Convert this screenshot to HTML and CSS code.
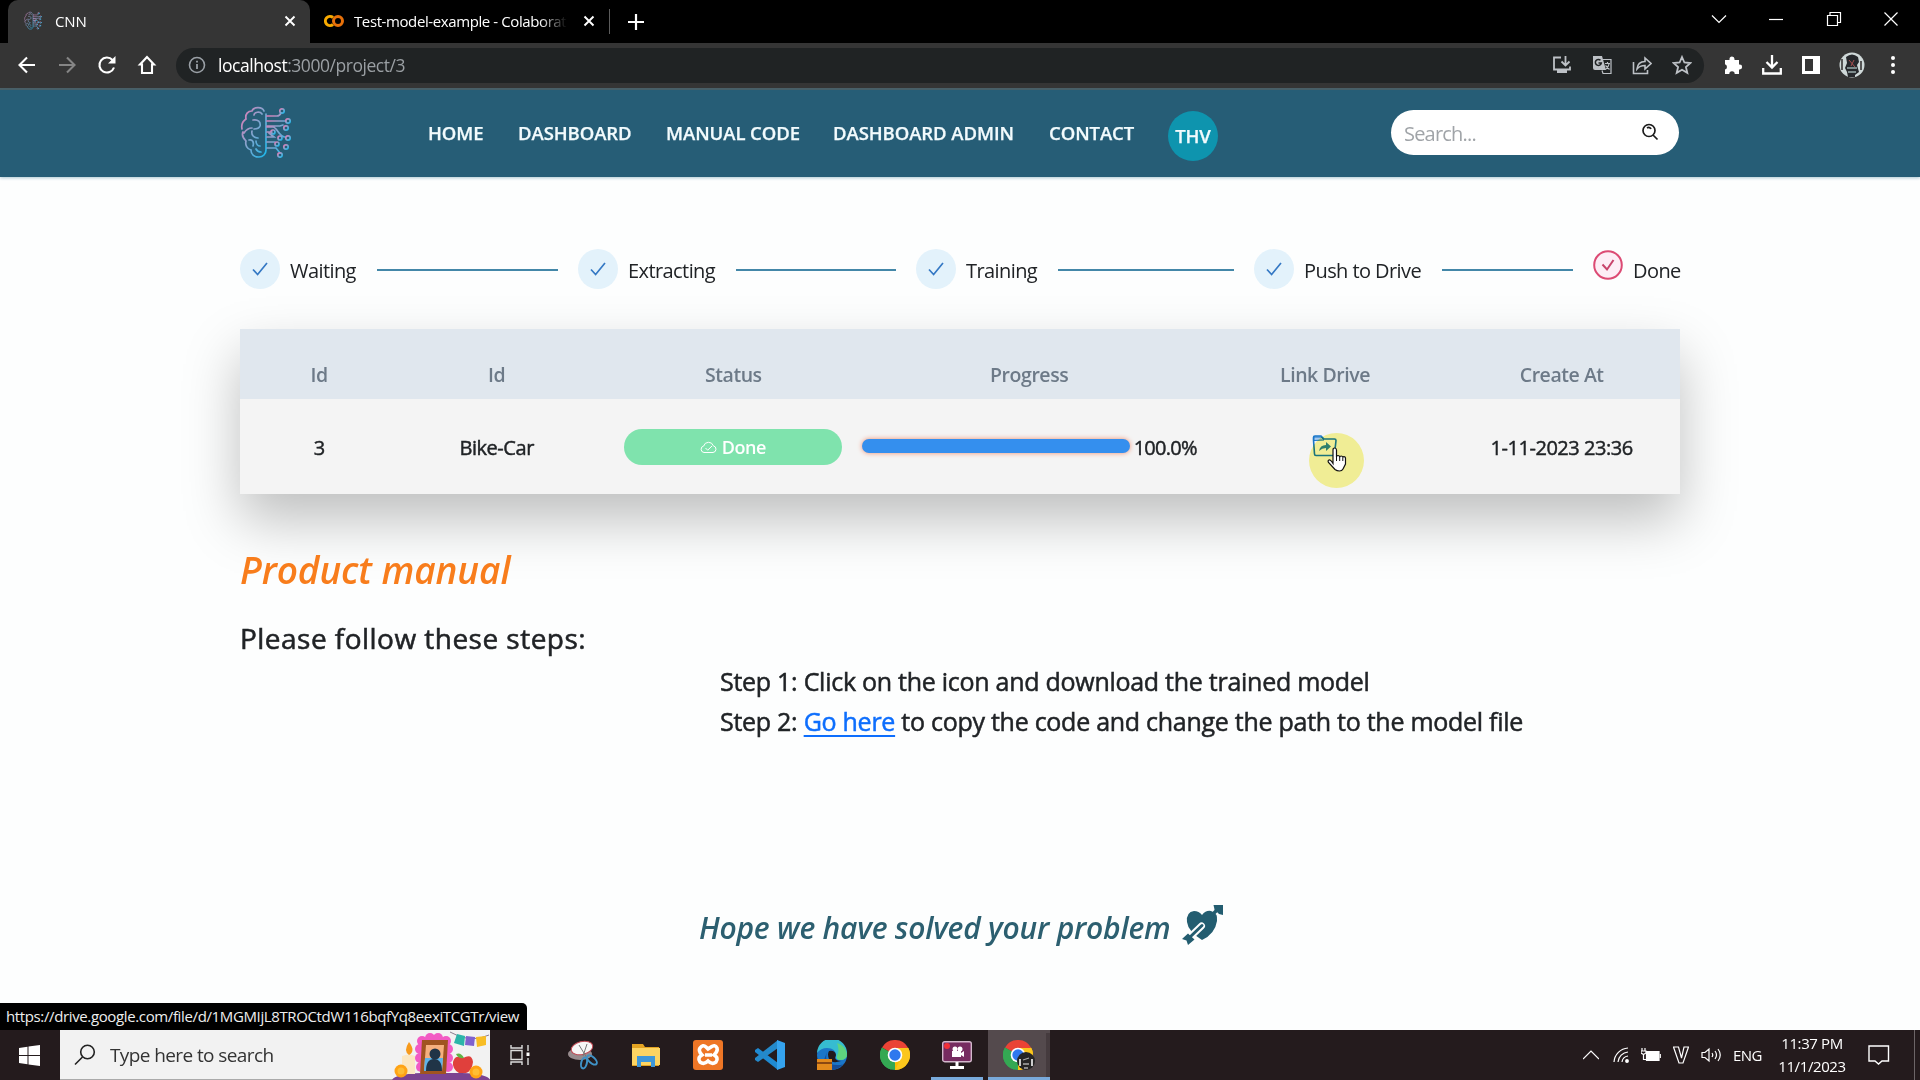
FILE: index.html
```html
<!DOCTYPE html>
<html lang="en">
<head>
<meta charset="utf-8">
<title>CNN</title>
<link rel="stylesheet" href="styles.css">
</head>
<body>
<svg class="defs" width="0" height="0" aria-hidden="true">
  <defs>
    <linearGradient id="brainInk" x1="0" y1="0" x2="1" y2="1">
      <stop offset="0" stop-color="#e879b4"/><stop offset=".5" stop-color="#7fa6cf"/><stop offset="1" stop-color="#19b8ec"/>
    </linearGradient>
    <symbol id="brain" viewBox="0 0 52 52">
      <g fill="none" stroke="url(#brainInk)" stroke-width="1.7" stroke-linecap="round">
        <path d="M26 8v36c0 4-3 7-7 7-5 0-8-3-8-7-4-1-6-5-5-9-4-4-4-7-3-9M2 23c-1-5 1-8 4-10-1-5 2-8 6-8 1-4 10-5 12 0M14 9c0-3 6-4 8-1M4 27c2-3 4-5 8-5M13 14c5-1 8 2 7 6-1 3-4 3-6 3M12 25c-1 4 2 7 6 7M9 34c4-1 5 3 4 6M16 35c0 3 2 5 4 5M16 43c1 2 3 3 5 3"/>
        <path d="M27 10h10c2 0 3-1 4-3M27 15h19M27 20h13l3-1M27 26h5M27 31h7l-5-4M27 21h6c4 0 6 10 12 10M27 36h8M27 42h9l4 5"/>
        <circle cx="42" cy="5" r="2.2"/><circle cx="48" cy="15" r="2.2"/><circle cx="46" cy="22" r="2.2"/><circle cx="33" cy="26" r="2"/><circle cx="40" cy="32" r="2"/><circle cx="48" cy="32" r="2.2"/><circle cx="37" cy="38" r="2"/><circle cx="46" cy="41" r="2.2"/><circle cx="40" cy="49" r="2.2"/>
      </g>
    </symbol>
    <symbol id="close" viewBox="0 0 12 12"><path d="M1.5 1.5l9 9m0-9l-9 9" stroke="#fff" stroke-width="1.9"/></symbol>
    <symbol id="check" viewBox="0 0 16 14"><path d="M1 7.5l4.6 5L15 1" fill="none" stroke="#3478c4" stroke-width="1.7"/></symbol>
    <symbol id="chrome" viewBox="0 0 30 30">
      <path d="M15 15L2 7.500A15 15 0 0 1 28 7.500z" fill="#ea4335"/>
      <path d="M15 15L28 7.500A15 15 0 0 1 15 30z" fill="#fbbc05"/>
      <path d="M15 15v15A15 15 0 0 1 2 7.500z" fill="#34a853"/>
      <path d="M15 8h13.300A15 15 0 0 1 15 30l6-11.500z" fill="#fbc61c"/>
      <path d="M2 7.500L9 18.500 15 22l-4 7.500A15 15 0 0 1 2 7.500z" fill="#34a853"/>
      <circle cx="15" cy="15" r="7.300" fill="#fff"/><circle cx="15" cy="15" r="5.700" fill="#2f78ee"/>
    </symbol>
  </defs>
</svg>

<div class="tabstrip">
  <div class="tab tab-active">
    <svg class="favicon" width="18" height="21"><use href="#brain"/></svg>
    <span class="tab-title">CNN</span>
    <svg class="tab-close" width="12" height="12"><use href="#close"/></svg>
  </div>
  <div class="tab">
    <svg class="favicon" width="20" height="14" viewBox="0 0 20 14"><g fill="none" stroke-width="3"><path d="M9 3.500A4.600 4.600 0 1 0 9 10.500" stroke="#f9ab00"/><circle cx="14" cy="7" r="4.500" stroke="#e8710a"/></g></svg>
    <span class="tab-title tab-title-long">Test-model-example - Colaborat</span>
    <svg class="tab-close" width="12" height="12"><use href="#close"/></svg>
  </div>
  <span class="tab-divider"></span>
  <svg class="new-tab" width="16" height="16" viewBox="0 0 16 16"><path d="M8 0v16M0 8h16" stroke="#fff" stroke-width="2.200"/></svg>
  <div class="window-controls">
    <svg width="16" height="16" viewBox="0 0 16 16"><path d="M1 4.500l7 7 7-7"/></svg>
    <svg width="16" height="16" viewBox="0 0 16 16"><path d="M1 8.500h14"/></svg>
    <svg width="16" height="16" viewBox="0 0 16 16"><path d="M1.500 4.500h10v10h-10zM4 4V1.500h10.500v10H12"/></svg>
    <svg width="16" height="16" viewBox="0 0 16 16"><path d="M1.500 1.500l13 13m0-13l-13 13"/></svg>
  </div>
</div>

<div class="toolbar">
  <div class="nav-buttons">
    <svg width="20" height="20" viewBox="0 0 20 20" class="line"><path d="M18 10H3M10 2.500L2.500 10l7.500 7.500"/></svg>
    <svg width="20" height="20" viewBox="0 0 20 20" class="line dim"><path d="M2 10h15M10 2.500l7.500 7.500-7.500 7.500"/></svg>
    <svg width="20" height="20" viewBox="0 0 20 20" class="line"><path d="M17 12.500A7.500 7.500 0 1 1 15.500 5"/><path d="M18.500 1v7.500H11z" fill="#fff" stroke="none"/></svg>
    <svg width="20" height="20" viewBox="0 0 20 20" class="line"><path d="M10 2L3 9.500h2V18h10V9.500h2z"/></svg>
  </div>
  <div class="omnibox">
    <svg class="info" width="18" height="18" viewBox="0 0 18 18"><circle cx="9" cy="9" r="7.500" fill="none" stroke="#9aa0a6" stroke-width="1.600"/><path d="M9 8v5M9 4.800v1.800" stroke="#9aa0a6" stroke-width="1.800"/></svg>
    <span class="url"><b>localhost</b>:3000/project/3</span>
    <div class="omni-actions">
      <svg width="20" height="20" viewBox="0 0 20 20"><g fill="none" stroke="#bdc1c6" stroke-width="1.800"><path d="M9 2.500H2v12h16v-3M13.500 1v9M9.500 6.500l4 4 4-4"/></g><path d="M5 15h10v3H5z" fill="#bdc1c6"/></svg>
      <svg width="20" height="20" viewBox="0 0 20 20"><path d="M1 1h9l4 14H3a2 2 0 0 1-2-2z" fill="#bdc1c6"/><path d="M8.500 5.300a3 3 0 1 0 .8 2.700H6.500" fill="none" stroke="#202324" stroke-width="1.500"/><path d="M11 4.500h8v14h-8l-1-3M13 8.500h5M15.500 7v1.500M17 9c-.5 3-2 4.500-3.500 5.500M13.500 10.500l4 4" fill="none" stroke="#bdc1c6" stroke-width="1.200"/></svg>
      <svg width="20" height="20" viewBox="0 0 20 20"><g fill="none" stroke="#bdc1c6" stroke-width="1.600"><path d="M1.500 7v11.500h14V15"/><path d="M5 14c.5-5 3-7.500 8-7.500V3l6 5.500-6 5.500v-3.500c-4 0-6 1-8 3.500z"/></g></svg>
      <svg width="20" height="20" viewBox="0 0 20 20"><path d="M10 2l2.400 5.500 6 .5-4.500 4 1.400 5.800L10 14.700l-5.300 3.100L6.100 12 1.600 8l6-.5z" fill="none" stroke="#bdc1c6" stroke-width="1.800"/></svg>
    </div>
  </div>
  <div class="ext-actions">
    <svg width="20" height="20" viewBox="0 0 20 20"><path d="M2 5h4.500V4a2.500 2.500 0 0 1 5 0v1H16v4.500h.7a2.400 2.400 0 0 1 0 4.900H16V19h-4.300a2.700 2.700 0 0 0-5.400 0H2v-4.500a2.700 2.700 0 0 0 0-5.200z" fill="#fff"/></svg>
    <svg width="20" height="20" viewBox="0 0 20 20"><path d="M10 0v12M4.500 7l5.500 5.500L15.500 7M1.200 13v5.500h17.600V13" fill="none" stroke="#fff" stroke-width="2.300"/></svg>
    <svg width="20" height="20" viewBox="0 0 20 20"><path d="M1 1h18v18H1zM4 4v12h8V4z" fill="#fff" fill-rule="evenodd"/></svg>
    <svg width="26" height="26" viewBox="0 0 26 26"><circle cx="13" cy="13" r="12.500" fill="#cfd8d8"/><path d="M7 5q6-5 12 0l1 5-2 3 2 7-4 3v2H9l-1-5-2-4 2-5z" fill="#26282c"/><path d="M10 8l6 7M15 8l-3 6" stroke="#a85050" fill="none"/><path d="M8 16h10M9 20h8" stroke="#9aa" stroke-width="1.500"/><path d="M3 7v11M22 9v9" stroke="#555" stroke-width="2"/></svg>
    <svg width="20" height="20" viewBox="0 0 20 20" fill="#fff"><circle cx="10" cy="3" r="2"/><circle cx="10" cy="10" r="2"/><circle cx="10" cy="17" r="2"/></svg>
  </div>
</div>

<main class="viewport">
  <header class="site-header">
    <svg class="logo" width="52" height="52"><use href="#brain"/></svg>
    <nav class="site-nav">
      <a>HOME</a><a>DASHBOARD</a><a>MANUAL CODE</a><a>DASHBOARD ADMIN</a><a>CONTACT</a>
      <span class="user-badge">THV</span>
    </nav>
    <div class="search">
      <span>Search...</span>
      <svg width="18" height="18" viewBox="0 0 18 18"><g fill="none" stroke="#1b1b1b" stroke-width="1.700"><circle cx="8" cy="7.500" r="6"/><path d="M12 12l4.500 4.500M6 5c1.500-1 3.500-.5 4 1"/></g></svg>
    </div>
  </header>

  <section class="content">
    <ol class="steps">
      <li><i class="dot"><svg width="16" height="14"><use href="#check"/></svg></i><span>Waiting</span><hr></li>
      <li><i class="dot"><svg width="16" height="14"><use href="#check"/></svg></i><span>Extracting</span><hr></li>
      <li><i class="dot"><svg width="16" height="14"><use href="#check"/></svg></i><span>Training</span><hr></li>
      <li><i class="dot"><svg width="16" height="14"><use href="#check"/></svg></i><span>Push to Drive</span><hr></li>
      <li class="last"><svg class="done-mark" width="30" height="30" viewBox="0 0 30 30"><circle cx="15" cy="15" r="13.800" fill="#fdeef6" stroke="#dc4b74" stroke-width="2"/><path d="M9.500 14.500l4.500 5 6.500-9.500" fill="none" stroke="#c8446c" stroke-width="2"/></svg><span>Done</span></li>
    </ol>

    <div class="table">
      <div class="row head"><span>Id</span><span>Id</span><span>Status</span><span>Progress</span><span>Link Drive</span><span>Create At</span></div>
      <div class="row body">
        <span>3</span><span>Bike-Car</span>
        <span class="status"><svg width="17" height="14" viewBox="0 0 17 14"><path d="M4 12.500a3.300 3.300 0 0 1-.3-6.500 5 5 0 0 1 9.600-.2A3.400 3.400 0 0 1 13 12.500zM5.500 8l2.200 2.200L12 6" fill="none" stroke="#fff" stroke-width="1"/></svg>Done</span>
        <span class="progress"><i class="bar"></i><b>100.0%</b></span>
        <span class="drive">
          <svg width="25" height="22" viewBox="0 0 25 22"><path d="M1.500 5V2.500Q1.500 1 3 1h6l3 3h10.500q1.500 0 1.500 1.500L22.500 19q0 1.500-1.500 1.500H4Q2.500 20.500 2.500 19z" fill="#f4f4f4" stroke="#1976c9" stroke-width="1.600"/><path d="M2 5.500V2h7l3 3z" fill="#a5c9ee" stroke="#1976c9"/><path d="M7 16q1-6 7-6V7l5 4.500-5 4.500v-3q-4 0-7 3z" fill="#2f83b0"/></svg>
          <i class="halo"></i>
          <svg class="hand" width="20" height="25" viewBox="0 0 20 25"><path d="M6 16.500V3q0-2 1.700-2T9.500 3v7q0-1.500 1.500-1.500t1.700 1.700q.2-1.200 1.500-1.200t1.600 1.600q.2-1 1.300-1T18.500 11v6l-2.500 5q-1 2-3.500 2T8 22.500L1.500 15.500Q.5 13.500 2 13t4 3.500z" fill="#fff" stroke="#111" stroke-width="1.200"/><path d="M9.500 10v4M12.700 10v4M15.800 11v3" stroke="#111"/></svg>
        </span>
        <span>1-11-2023 23:36</span>
      </div>
    </div>

    <h1>Product manual</h1>
    <h2>Please follow these steps:</h2>
    <div class="instructions">
      <p>Step 1: Click on the icon and download the trained model</p>
      <p>Step 2: <a>Go here</a> to copy the code and change the path to the model file</p>
    </div>
    <p class="closing"><span>Hope we have solved your problem</span>
      <svg width="41" height="41" viewBox="0 0 41 41"><path d="M20 35Q6 26 5 17 4 7 12 6q5 0 8 4 4-5 9-4 7 2 6 10-2 13-15 19z" fill="#235d70"/><path d="M19.500 21L7 33" stroke="#fdfefe" stroke-width="7" stroke-linecap="round"/><path d="M20 20.500L7 33" stroke="#235d70" stroke-width="3" stroke-linecap="round"/><path d="M6 28.500l-6 5.500 4.500 1.500L6 40l6.500-5.500z" fill="#235d70"/><path d="M29 11l6-6" stroke="#235d70" stroke-width="3.500"/><path d="M31.500 0H41v10l-4-1-4.500-4.500z" fill="#235d70"/></svg>
    </p>
  </section>
  <div class="link-hint"><span>https://drive.google.com/file/d/1MGMIjL8TROCtdW116bqfYq8eexiTCGTr/view</span></div>
</main>

<footer class="taskbar">
  <div class="start"><svg width="21" height="21" viewBox="0 0 21 21"><path d="M0 3l8.500-1.200V10H0zM9.500 1.600L21 0v10H9.500zM0 11h8.500v8.200L0 18zM9.500 11H21v10L9.500 19.400z" fill="#fff"/></svg></div>
  <div class="task-search">
    <svg width="22" height="22" viewBox="0 0 22 22"><g fill="none" stroke="#222" stroke-width="1.600"><circle cx="13.500" cy="8" r="6.800"/><path d="M8.500 13L1 20.500"/></g></svg>
    <span>Type here to search</span>
    <svg class="altar" width="98" height="50" viewBox="0 0 98 50">
      <path d="M0 50q3-6 30-7h40q26 1 28 7z" fill="#7b4390"/>
      <path d="M10 26q7-3 13 0v18H10z" fill="#fbe7c2"/><path d="M17 12q7 9 0 13-6-4 0-13z" fill="#f79a1c"/>
      <g fill="#f25bc4"><circle cx="30" cy="11" r="5"/><circle cx="38" cy="8" r="5"/><circle cx="46" cy="8" r="5"/><circle cx="54" cy="11" r="5"/><circle cx="28" cy="19" r="5"/><circle cx="56" cy="19" r="5"/><circle cx="28" cy="28" r="5"/><circle cx="56" cy="28" r="5"/><circle cx="29" cy="37" r="5"/><circle cx="56" cy="37" r="5"/></g>
      <path d="M30 10h26l-2 34H28z" fill="#a05420"/><path d="M34 15h18l-2 26H32z" fill="#f6b07e"/><path d="M33 28h18l-1 13H32z" fill="#5fb3e8"/><circle cx="43" cy="24" r="5.500" fill="#203447"/><path d="M34 41q0-12 8-12t8 12z" fill="#203447"/>
      <path d="M58 2q20 12 39 3" fill="none" stroke="#8b7c8f"/><path d="M65 4l8 2-1 10-10-3z" fill="#2bb5a9"/><path d="M74 6l9 1-1 9-9-1z" fill="#7f62cf"/><path d="M84 7l10-1v9l-9 2z" fill="#f8bd24"/>
      <path d="M71 28q9-5 10 4-1 9-7 11h-7q-7-4-6-11 2-8 10-4z" fill="#e0403c"/><path d="M64 24q5-2 8 4-6 1-8-4z" fill="#62b346"/><circle cx="9" cy="41" r="6.500" fill="#ffa315"/><circle cx="84" cy="42" r="6.500" fill="#ffa315"/><circle cx="9" cy="41" r="3.500" fill="#ffbd35"/><circle cx="84" cy="42" r="3.500" fill="#ffbd35"/>
    </svg>
  </div>
  <div class="apps">
    <div><svg width="22" height="20" viewBox="0 0 22 20"><g fill="none" stroke="#ddd" stroke-width="1.400"><path d="M2 5.500h11v9H2zM2 0v3h11V0M2 20v-3h11v3M19 0v6M19 13v7"/></g><path d="M17.500 7.500h3v3.500h-3z" fill="#fff"/></svg></div>
    <div><svg width="32" height="30" viewBox="0 0 32 30"><ellipse cx="13" cy="14" rx="12" ry="6" fill="#978b8d"/><ellipse cx="15" cy="8" rx="11" ry="6.500" transform="rotate(-14 15 8)" fill="#f6f6f6" stroke="#c04b55"/><path d="M12 5l8 13M20 4l-4 12" stroke="#777"/><g fill="none" stroke="#3f92c6" stroke-width="2"><ellipse cx="17" cy="23" rx="2.800" ry="5.500" transform="rotate(14 17 23)"/><ellipse cx="25" cy="20" rx="3" ry="6" transform="rotate(-48 25 20)"/></g></svg></div>
    <div><svg width="30" height="26" viewBox="0 0 30 26"><path d="M1 2h11l2 3h14v19H1z" fill="#e3a322"/><path d="M1 6h28v17H1z" fill="#fcd462"/><path d="M6 14h18v11h-4v-5h-10v5H6z" fill="#3f97d8"/></svg></div>
    <div><svg width="30" height="30" viewBox="0 0 30 30"><rect width="30" height="30" rx="3" fill="#ee7626"/><path d="M7 8q3-4 6-1l2 2 3-2q4-3 6 1 1 3-3 7 5 3 2 7-4 3-8-1-4 4-8 1-3-4 2-7-4-4-2-7zM12 15h7" fill="none" stroke="#fff" stroke-width="3.600"/></svg></div>
    <div><svg width="30" height="30" viewBox="0 0 30 30"><path d="M0 10l3-2 20 15v7L0 12z" fill="#1f8ad2"/><path d="M0 20l3 2L23 8V0L0 18z" fill="#2489ca"/><path d="M22 0l8 3v24l-8 3z" fill="#35a3ee"/></svg></div>
    <div><svg width="30" height="30" viewBox="0 0 30 30"><circle cx="15" cy="15" r="15" fill="#1b76c8"/><path d="M0 13A15 15 0 0 1 30 14q0 6-7 6-5 0-4-4Q19 8 10 8 4 8 0 13z" fill="#36bcd0"/><path d="M20 3q9 3 10 11 0 6-7 6-4 0-3-4 3-6 0-13z" fill="#5fd47e"/><path d="M10 12q-4 14 12 13 4 0 5-2-5 7-13 7T7 20z" fill="#174e98"/><path d="M12 11q6-1 7 4l-1 3q1 3 6 3-9 3-12-2-2-5 0-8z" fill="#221a1c"/><path d="M0 19h15v11H0z" fill="#e38a1c"/><path d="M0 23h15" stroke="#8b4812" stroke-width="2"/></svg></div>
    <div><svg width="30" height="30"><use href="#chrome"/></svg></div>
    <div class="running"><svg width="30" height="28" viewBox="0 0 30 28"><rect x=".7" y=".7" width="28.600" height="20" rx="2" fill="#762b60" stroke="#d3b8cc" stroke-width="1.400"/><path d="M15 21v4M8 26.500h14" stroke="#fff" stroke-width="3"/><circle cx="5" cy="5" r="3" fill="#f23038"/><circle cx="13" cy="8" r="2.500" fill="#fff"/><circle cx="18" cy="8" r="2.500" fill="#fff"/><path d="M10 10h9v6h-9zM19 12l3-2v6l-3-2z" fill="#fff"/></svg></div>
    <div class="running current"><svg width="32" height="31" viewBox="0 0 32 31"><use href="#chrome" width="30" height="30"/><circle cx="23" cy="21" r="9" fill="#252525"/><path d="M17 19v7M29 19v7" stroke="#ccc" stroke-width="2"/><path d="M20 20l6-2M20 24h6M21 28h4" stroke="#aaa" stroke-width="1.300"/></svg></div>
  </div>
  <div class="tray">
    <svg width="16" height="16" viewBox="0 0 16 16"><path d="M0 12l8-8 8 8"/></svg>
    <svg width="16" height="16" viewBox="0 0 16 16"><path d="M1 15A15 15 0 0 1 15 1M5 15A11 11 0 0 1 15 5M9 15a7 7 0 0 1 6-6"/><circle cx="14" cy="14" r="1.300" fill="#fff"/></svg>
    <svg width="20" height="14" viewBox="0 0 20 14"><path d="M5.500 3.500h12.500v9H5.500z" fill="#fff"/><path d="M19.300 6v4M1 0v3M4 0v3M0 3h5v2L2.500 6.500 0 5zM2.500 6v5.500H5"/></svg>
    <svg width="16" height="18" viewBox="0 0 16 18"><path d="M.5 1h5L8.500 12 11 1h4.500L10 17H6z"/></svg>
    <svg width="20" height="16" viewBox="0 0 20 16"><path d="M1 5.500h3L8 2v12l-4-3.500H1zM11 6q1.500 2 0 4M14 4q3 4 0 8M17 2q4.500 6 0 12"/></svg>
    <span class="lang">ENG</span>
  </div>
  <div class="clock"><span>11:37 PM</span><span>11/1/2023</span></div>
  <svg class="notice" width="22" height="20" viewBox="0 0 22 20"><path d="M1 1h19.500v15H14l-3.500 3L7 16H1z" fill="none" stroke="#fff" stroke-width="1.400"/></svg>
  <span class="peek"></span>
</footer>
</body>
</html>
```
FILE: styles.css
```css
* { box-sizing: border-box; }
body { margin: 0; width: 1920px; height: 1080px; overflow: hidden; display: flex; flex-direction: column; background: #fdfefe; font-family: "Open Sans", "Noto Sans", sans-serif; color: #202326; }
svg { flex: none; display: block; }
p, h1, h2, ol { margin: 0; padding: 0; }
.defs { position: absolute; }

/* browser frame */
.tabstrip { height: 43px; flex: none; background: #000; display: flex; align-items: center; padding-left: 8px; color: #fff; }
.tab { display: flex; align-items: center; height: 43px; padding: 0 14px 2px; font-size: 15px; white-space: nowrap; }
.tab-active { width: 302px; background: #353535; border-radius: 10px 10px 0 0; padding-left: 16px; }
.favicon { margin-right: 13px; }
.tab-title { letter-spacing: -.1px; }
.tab:not(.tab-active) { width: 299px; }
.tab:not(.tab-active) .favicon { margin-right: 10px; }
.tab-title-long { width: 213px; overflow: hidden; letter-spacing: -.4px; -webkit-mask-image: linear-gradient(90deg, #000 87%, transparent); mask-image: linear-gradient(90deg, #000 87%, transparent); }
.tab-close { margin-left: auto; }
.tab-divider { width: 1px; height: 25px; background: #5c5c5c; }
.new-tab { margin-left: 18px; }
.window-controls { margin-left: auto; display: flex; gap: 41.300px; padding: 0 21px 5px 0; fill: none; stroke: #fff; stroke-width: 1.200; }
.toolbar { height: 47px; flex: none; background: #353535; border-bottom: 2px solid #4b6067; display: flex; align-items: center; padding-bottom: 1px; }
.nav-buttons { display: flex; width: 176px; gap: 20px; padding-left: 17px; }
.line { fill: none; stroke: #fff; stroke-width: 2.100; }
.dim { stroke: #858585; }
.omnibox { height: 35px; width: 1528px; border-radius: 18px; background: #202324; display: flex; align-items: center; padding: 0 12px; }
.url { color: #9a9fa3; font-size: 17.500px; margin-left: 12px; letter-spacing: -.46px; }
.url b { color: #fff; font-weight: 400; }
.omni-actions { margin-left: auto; display: flex; gap: 20px; }
.ext-actions { display: flex; align-items: center; gap: 19px; padding-left: 19px; }
.ext-actions svg:nth-child(4) { margin: 0 -1px; }

/* page */
.viewport { height: 940px; flex: none; position: relative; }
.site-header { height: 87px; background: #265d76; box-shadow: 0 1px 3px #0b5c7a55; display: flex; padding-left: 240px; align-items: flex-start; }
.logo { margin-top: 16px; }
.site-nav { margin-left: 136px; width: 963px; height: 87px; display: grid; grid-template-columns: 90px 148px 167px 216px 119px 50px; color: #f2fbfd; font-weight: 600; font-size: 18.500px; line-height: 86px; white-space: nowrap; letter-spacing: -.07px; -webkit-text-stroke: .25px #f2fbfd; }
.user-badge { height: 50px; width: 50px; margin-top: 21px; border-radius: 50%; background: #0e94ae; line-height: 50px; text-align: center; }
.search { width: 288px; height: 45px; margin-top: 20px; border-radius: 23px; background: #fff; color: #a0a4a8; font-size: 20px; display: flex; justify-content: space-between; align-items: center; padding: 1px 20px 0 13px; letter-spacing: -.8px; }
.search svg { margin-bottom: 3px; }
.content { padding: 72px 240px 0; }
.steps { list-style: none; display: grid; grid-template-columns: 338px 338px 338px 339px auto; height: 40px; font-size: 20px; }
.steps li { display: flex; align-items: center; padding-right: 20px; white-space: nowrap; letter-spacing: -.58px; }
.steps .last { padding: 0; }
.dot { width: 40px; height: 40px; flex: none; border-radius: 50%; background: #e3f2fb; display: flex; align-items: center; justify-content: center; }
.steps span { margin: 2px 0 0 10px; flex: none; }
.steps hr { flex: 1; height: 1.500px; border: 0; margin: 2px 0 0 21px; background: #4387a8; }
.done-mark { margin-bottom: 8px; }
.table { margin-top: 40px; height: 165px; background: #f4f4f4; box-shadow: 0 26px 52px rgba(0,0,0,.25); font-weight: 600; font-size: 19.500px; letter-spacing: -.45px; }
.row { display: grid; grid-template-columns: repeat(12, 1fr); padding-left: 20px; text-align: center; }
.row > span { grid-column: span 2; }
.row > span:first-child { grid-column: span 1; }
.row > span:nth-child(4) { grid-column: span 3; }
.head { height: 70px; background: #e0e7ee; color: #6d7a88; padding-top: 22px; line-height: 48px; }
.body { height: 95px; padding-top: 2px; align-items: center; color: #202326; font-weight: 400; font-size: 20px; -webkit-text-stroke: .45px #202326; }
.body > span { white-space: nowrap; }
.body .status { height: 36px; margin: 0 10px 2px 9px; border-radius: 18px; background: #7fe3ad; color: #fff; display: flex; align-items: center; justify-content: center; gap: 5px; font-size: 18px; font-weight: 600; -webkit-text-stroke: 0; }
.body .progress { display: flex; align-items: center; padding-left: 10px; letter-spacing: -.75px; }
.bar { width: 268px; height: 14px; border-radius: 7px; background: #348fee; box-shadow: 0 0 5px #ef8b6c; margin: 0 4px 3px 0; }
.progress b { font-weight: 400; }
.drive { display: flex; justify-content: center; position: relative; padding-bottom: 3px; }
.halo { position: absolute; left: 102px; top: -2px; width: 55px; height: 55px; border-radius: 50%; background: #fbf89c; mix-blend-mode: multiply; }
.hand { position: absolute; left: 120px; top: 12px; }
h1 { margin-top: 46px; color: #f87d1c; font-style: italic; font-weight: 600; font-size: 37px; line-height: 60px; white-space: nowrap; letter-spacing: -.1px; }
h2 { margin-top: 16px; font-weight: 400; font-size: 28px; line-height: 44px; white-space: nowrap; letter-spacing: .47px; -webkit-text-stroke: .55px #202326; }
.instructions { margin: 1px 0 0 480px; font-size: 25px; line-height: 40px; white-space: nowrap; letter-spacing: -.27px; -webkit-text-stroke: .5px currentColor; }
.instructions a { color: #0d6efd; text-decoration: underline; text-decoration-thickness: 2px; text-underline-offset: 4px; }
.closing { display: flex; align-items: center; margin: 164px 0 0 459px; height: 44px; gap: 11px; color: #2c5f70; font-size: 30px; font-style: italic; font-weight: 600; white-space: nowrap; letter-spacing: -.22px; }
.closing svg { margin-bottom: 3px; }
.link-hint { position: absolute; left: 0; bottom: 0; width: 527px; height: 27px; background: #000; border-top-right-radius: 5px; color: #eee; font-size: 15px; line-height: 26px; padding-left: 6px; white-space: nowrap; letter-spacing: -.37px; }

/* desktop taskbar */
.taskbar { height: 50px; flex: none; background: #241b1d; display: flex; align-items: center; color: #fff; }
.start { width: 60px; padding-left: 19px; }
.task-search { width: 430px; height: 50px; background: #f2f2f2; border-bottom: 1px solid #aaa; color: #333; display: flex; align-items: center; padding-left: 14px; font-size: 19px; letter-spacing: -.6px; white-space: nowrap; }
.task-search span { margin-left: 14px; }
.altar { margin-left: auto; }
.apps { display: flex; height: 50px; }
.apps div { width: 62.250px; display: flex; align-items: center; justify-content: center; border-bottom: 3px solid transparent; border-top: 3px solid transparent; }
.apps div:first-child { padding-right: 3px; }
.apps .running { border-bottom-color: #79aadb; width: 52px; margin: 0 5px; }
.apps .current { width: 62px; margin: 0; background: #544a4d; border-top-color: #544a4d; box-shadow: inset -4px 0 #453b3e; }
.tray { margin-left: auto; display: flex; align-items: center; gap: 12px; fill: none; stroke: #fff; stroke-width: 1.200; padding-right: 16px; }
.tray svg:first-child { margin-right: 2px; }
.lang { font-size: 15px; letter-spacing: -.5px; }
.clock { width: 68px; display: flex; flex-direction: column; align-items: center; font-size: 15px; line-height: 23px; letter-spacing: -.4px; white-space: nowrap; }
.notice { margin-left: 22px; }
.peek { width: 1px; height: 50px; background: #6c6567; margin: 0 5px 0 24px; }
```
